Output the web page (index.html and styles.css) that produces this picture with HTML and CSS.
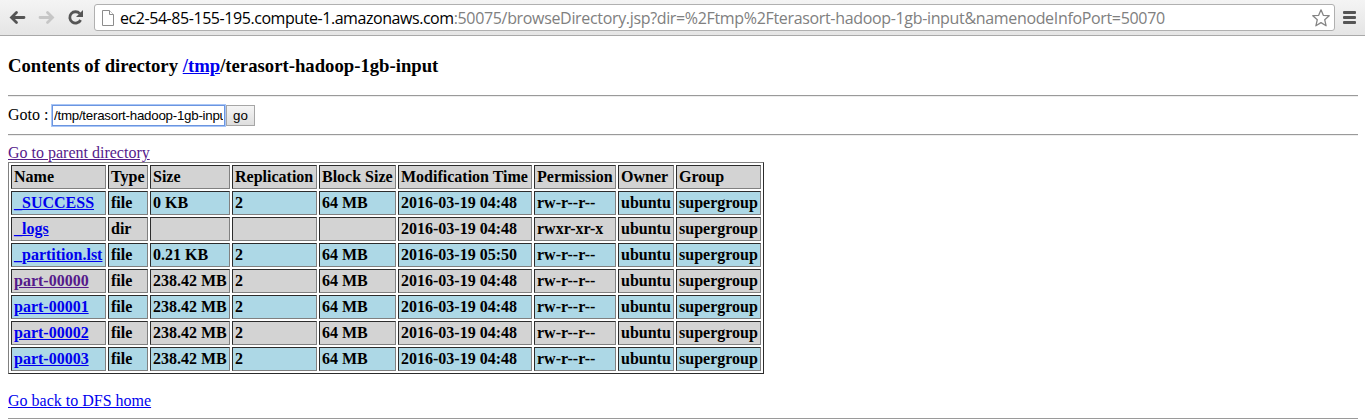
FILE: index.html
```html
<!DOCTYPE html>
<html lang="en">
<head>
<meta charset="utf-8">
<title>HDFS:/tmp/terasort-hadoop-1gb-input</title>
<link rel="stylesheet" href="styles.css">
</head>
<body>
<header class="toolbar">
  <svg class="nav" width="90" height="36" viewBox="0 0 90 36" fill="none">
    <path d="M24 17.500H12M16.500 12.500L11.500 17.500L16.500 22.500" stroke="#555" stroke-width="2.800" stroke-linecap="round"/>
    <path d="M40 17.500H52M47.500 12.500L52.500 17.500L47.500 22.500" stroke="#c6c6c6" stroke-width="2.800" stroke-linecap="round"/>
    <path d="M79.800 13.700A5.700 5.700 0 1 0 80.600 20" stroke="#555" stroke-width="2.800"/>
    <path d="M83 10V17H76Z" fill="#555"/>
  </svg>
  <div class="address">
    <svg class="page-icon" width="12" height="16" viewBox="0 0 12 16" fill="#fff" stroke="#8c8c8c">
      <path d="M.5.5H7.500L11.500 4.500V15.500H.5Z"/><path d="M7.500.5V4.500H11.500"/>
    </svg>
    <span class="url">ec2-54-85-155-195.compute-1.amazonaws.com<span class="path">:50075/browseDirectory.jsp?dir=%2Ftmp%2Fterasort-hadoop-1gb-input&amp;namenodeInfoPort=50070</span></span>
    <svg class="star" width="18" height="18" viewBox="0 0 18 18" fill="#fff" stroke="#858585" stroke-width="1.300" stroke-linejoin="round">
      <path d="M9 .8L11.300 6.300L17.200 6.700L12.700 10.700L14.100 16.800L9 13.600L3.900 16.800L5.300 10.700L.8 6.700L6.700 6.300Z"/>
    </svg>
  </div>
  <svg class="menu" width="13" height="13" viewBox="0 0 13 13" fill="#555">
    <rect width="13" height="3" rx="1"/><rect y="5" width="13" height="3" rx="1"/><rect y="10" width="13" height="3" rx="1"/>
  </svg>
</header>
<main class="content">
  <h3 class="title">Contents of directory <a href="#">/tmp</a>/terasort-hadoop-1gb-input</h3>
  <hr class="rule">
  <form class="goto"><span class="label">Goto :</span><input class="field" type="text" value="/tmp/terasort-hadoop-1gb-input"><button class="go" type="button">go</button></form>
  <hr class="rule">
  <a class="parent visited" href="#">Go to parent directory</a>
  <table class="files">
    <colgroup><col class="c-name"><col class="c-type"><col class="c-size"><col class="c-repl"><col class="c-block"><col class="c-time"><col class="c-perm"><col class="c-owner"><col class="c-group"></colgroup>
    <tr><td>Name</td><td>Type</td><td>Size</td><td>Replication</td><td>Block Size</td><td>Modification Time</td><td>Permission</td><td>Owner</td><td>Group</td></tr>
    <tr class="blue"><td><a href="#">_SUCCESS</a></td><td>file</td><td>0 KB</td><td>2</td><td>64 MB</td><td>2016-03-19 04:48</td><td>rw-r--r--</td><td>ubuntu</td><td>supergroup</td></tr>
    <tr><td><a href="#">_logs</a></td><td>dir</td><td></td><td></td><td></td><td>2016-03-19 04:48</td><td>rwxr-xr-x</td><td>ubuntu</td><td>supergroup</td></tr>
    <tr class="blue"><td><a href="#">_partition.lst</a></td><td>file</td><td>0.21 KB</td><td>2</td><td>64 MB</td><td>2016-03-19 05:50</td><td>rw-r--r--</td><td>ubuntu</td><td>supergroup</td></tr>
    <tr><td><a class="visited" href="#">part-00000</a></td><td>file</td><td>238.42 MB</td><td>2</td><td>64 MB</td><td>2016-03-19 04:48</td><td>rw-r--r--</td><td>ubuntu</td><td>supergroup</td></tr>
    <tr class="blue"><td><a href="#">part-00001</a></td><td>file</td><td>238.42 MB</td><td>2</td><td>64 MB</td><td>2016-03-19 04:48</td><td>rw-r--r--</td><td>ubuntu</td><td>supergroup</td></tr>
    <tr><td><a href="#">part-00002</a></td><td>file</td><td>238.42 MB</td><td>2</td><td>64 MB</td><td>2016-03-19 04:48</td><td>rw-r--r--</td><td>ubuntu</td><td>supergroup</td></tr>
    <tr class="blue"><td><a href="#">part-00003</a></td><td>file</td><td>238.42 MB</td><td>2</td><td>64 MB</td><td>2016-03-19 04:48</td><td>rw-r--r--</td><td>ubuntu</td><td>supergroup</td></tr>
  </table>
  <a class="home" href="#">Go back to DFS home</a>
  <hr class="rule">
</main>
</body>
</html>
```
FILE: styles.css
```css
* { box-sizing: border-box; }
body {
  margin: 0;
  height: 419px;
  overflow: hidden;
  background: #fff;
  color: #000;
  font: 16px/18px "Liberation Serif", serif;
}
a { color: #00e; }
a.visited { color: #551a8b; }

.toolbar {
  display: flex;
  align-items: flex-start;
  height: 36px;
  background: linear-gradient(#f4f4f4, #e5e5e5);
  border-bottom: 1px solid #a9a9a9;
}
.nav { flex: none; margin-right: 4px; }
.address {
  display: flex;
  align-items: center;
  width: 1241px;
  height: 27px;
  margin-top: 4px;
  padding: 0 4px 0 7px;
  background: #fff;
  border: 1px solid #b0b0b0;
  border-radius: 3px;
}
.page-icon { flex: none; margin-right: 6px; }
.url {
  flex: 1;
  font: 16px/24px "Open Sans", sans-serif;
  letter-spacing: -.44px;
  white-space: nowrap;
}
.path { color: #808080; letter-spacing: -.335px; }
.star { flex: none; }
.menu { flex: none; margin: 11px 0 0 8px; }

.content { display: flex; flex-direction: column; padding: 0 7px 0 8px; }
.title { margin: 21px 0 20px; font-size: 18.72px; line-height: 18px; }
.title a { font-weight: bold; }
.rule {
  width: 100%;
  height: 2px;
  margin: 0;
  flex: none;
  border: 0;
  border-top: 1px solid #9a9a9a;
  border-bottom: 1px solid #eee;
}
.goto { display: flex; height: 37px; padding-top: 7px; }
.label { width: 44px; padding-top: 2px; }
.field {
  width: 173px;
  height: 21px;
  margin: 1px 1px 0 0;
  padding: 0 1px;
  border: 1px solid #6b95e0;
  box-shadow: 0 0 0 1px #a9c6f6;
  outline: 0;
  font: 13.33px "Liberation Sans", sans-serif;
  letter-spacing: -.25px;
}
.go {
  width: 29px;
  height: 21px;
  margin-top: 1px;
  padding: 0;
  border: 1px solid #a6a6a6;
  background: linear-gradient(#f5f5f5, #dedede);
  font: 13.33px "Liberation Sans", sans-serif;
}
.parent, .home { align-self: flex-start; }
.parent { margin-top: 8px; }
.home { margin: 18px 0 8px; }

.files {
  width: 756px;
  table-layout: fixed;
  border: 1px outset gray;
  border-collapse: separate;
  border-spacing: 2px;
  font-weight: bold;
}
.files td {
  height: 24px;
  padding: 2px;
  border: 1px inset gray;
  background: lightgrey;
  white-space: nowrap;
}
.files .blue td { background: lightblue; }
.c-name { width: 95px; }
.c-type { width: 40px; }
.c-size { width: 80px; }
.c-repl { width: 85px; }
.c-block { width: 77px; }
.c-time { width: 134px; }
.c-perm { width: 82px; }
.c-owner { width: 56px; }
.c-group { width: 85px; }
```
